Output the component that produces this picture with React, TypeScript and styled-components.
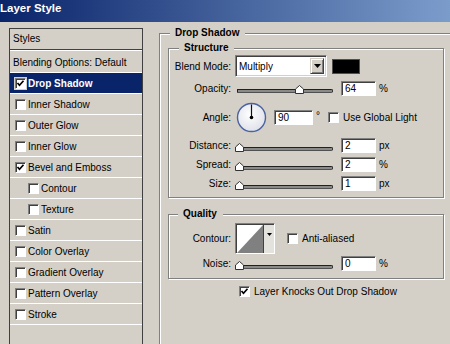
import React from 'react';
import styled, { createGlobalStyle } from 'styled-components';

const FACE = '#d4d0c8';
const NAVY = '#0a246a';

const GlobalStyle = createGlobalStyle`
  html, body {
    margin: 0;
    padding: 0;
    background: ${FACE};
  }
  body {
    font-family: "Liberation Sans", Arial, sans-serif;
    font-size: 10px;
    color: #000;
    overflow: hidden;
  }
`;

const Window = styled.div`
  width: 450px;
  height: 344px;
  overflow: hidden;
  background: ${FACE};
  display: flex;
  flex-direction: column;
`;

const TitleBar = styled.div`
  height: 22px;
  flex-shrink: 0;
  background: linear-gradient(to right, ${NAVY} 0, #a6caf0 620px);
  display: flex;
  align-items: flex-start;
  padding-top: 2px;
  box-sizing: border-box;
`;

const Title = styled.span`
  color: #fff;
  font-weight: bold;
  font-size: 11.5px;
  line-height: 13px;
`;

const Body = styled.div`
  flex: 1;
  display: flex;
  align-items: flex-start;
  padding: 6px 0 0 9px;
  min-height: 0;
`;

/* left styles list */

const StylesPanel = styled.div`
  width: 134px;
  height: 340px;
  flex-shrink: 0;
  box-sizing: border-box;
  border: 1px solid #404040;
  border-bottom: none;
  display: flex;
  flex-direction: column;
`;

const PanelHeader = styled.div`
  height: 20px;
  line-height: 20px;
  padding-left: 3px;
  border-bottom: 1px solid #404040;
  box-shadow: 0 1px 0 #fff;
  margin-bottom: 2px;
`;

const StyleRow = styled.div<{ $selected?: boolean; $indent?: number }>`
  height: 20px;
  display: flex;
  align-items: center;
  gap: 2px;
  padding-left: ${p => p.$indent ?? 5}px;
  border-bottom: 1px solid #fff;
  background: ${p => (p.$selected ? NAVY : 'transparent')};
  color: ${p => (p.$selected ? '#fff' : '#000')};
  font-weight: ${p => (p.$selected ? 'bold' : 'normal')};
  white-space: nowrap;
`;

/* win-classic controls */

const CheckBox = styled.span`
  width: 11px;
  height: 11px;
  flex-shrink: 0;
  box-sizing: border-box;
  background: #fff;
  border-top: 1px solid #808080;
  border-left: 1px solid #808080;
  border-bottom: 1px solid #fff;
  border-right: 1px solid #fff;
  box-shadow: inset 1px 1px 0 #404040;
  display: flex;
  align-items: center;
  justify-content: center;
  outline: 1px solid ${FACE};
`;

const Check = ({ checked }: { checked?: boolean }) => (
  <CheckBox>
    {checked && (
      <svg width="9" height="9" viewBox="0 0 9 9">
        <path d="M1.5 4 L3.5 6.2 L7.5 1.8" fill="none" stroke="#000" strokeWidth="1.7" />
      </svg>
    )}
  </CheckBox>
);

const Field = styled.span<{ $w: number }>`
  width: ${p => p.$w}px;
  height: 15px;
  flex-shrink: 0;
  box-sizing: border-box;
  background: #fff;
  border-top: 1px solid #808080;
  border-left: 1px solid #808080;
  border-bottom: 1px solid #fff;
  border-right: 1px solid #fff;
  box-shadow: inset 1px 1px 0 #404040;
  padding-left: 3px;
  line-height: 13px;
  margin-left: ${p => (p.$w > 36 ? 7 : 8)}px;
`;

const Unit = styled.span`
  margin-left: 3px;
`;

/* group boxes */

const Group = styled.fieldset<{ $w: number; $h?: number; $pl?: number }>`
  margin: 0;
  padding: 0 0 0 ${p => p.$pl ?? 0}px;
  width: ${p => p.$w}px;
  ${p => (p.$h ? `height: ${p.$h}px;` : '')}
  box-sizing: border-box;
  border: 1px solid #808080;
  box-shadow: inset 1px 1px 0 #fff, 1px 1px 0 #fff;
  min-width: 0;
`;

const Legend = styled.legend<{ $ml: number }>`
  font-weight: bold;
  line-height: 12px;
  margin-left: ${p => p.$ml}px;
  padding: 0 6px 0 5px;
  background: ${FACE};
`;

const Content = styled.div`
  margin-left: 16px;
  margin-top: -1px;
`;

const Spacer = styled.div<{ $h: number }>`
  height: ${p => p.$h}px;
`;

const Row = styled.div<{ $h: number; $mt?: number }>`
  display: grid;
  grid-template-columns: 62px auto;
  column-gap: 4px;
  align-items: center;
  height: ${p => p.$h}px;
  margin-top: ${p => p.$mt ?? 0}px;
`;

const Label = styled.span`
  text-align: right;
  white-space: nowrap;
`;

const Controls = styled.div`
  display: flex;
  align-items: center;
  white-space: nowrap;
`;

/* blend mode */

const Select = styled.div`
  width: 92px;
  height: 22px;
  box-sizing: border-box;
  background: #fff;
  border-top: 1px solid #808080;
  border-left: 1px solid #808080;
  border-bottom: 1px solid #fff;
  border-right: 1px solid #fff;
  box-shadow: inset 1px 1px 0 #404040, inset -1px -1px 0 ${FACE};
  display: flex;
  align-items: center;
  padding: 2px 2px 2px 3px;
`;

const SelectText = styled.span`
  flex: 1;
`;

const DropButton = styled.span`
  width: 14px;
  height: 16px;
  box-sizing: border-box;
  background: ${FACE};
  border-top: 1px solid ${FACE};
  border-left: 1px solid ${FACE};
  border-bottom: 1px solid #404040;
  border-right: 1px solid #404040;
  box-shadow: inset 1px 1px 0 #fff, inset -1px -1px 0 #808080;
  display: flex;
  align-items: center;
  justify-content: center;
`;

const Arrow = () => (
  <svg width="7" height="4" viewBox="0 0 7 4">
    <polygon points="0,0 7,0 3.5,4" fill="#000" />
  </svg>
);

const Swatch = styled.span`
  width: 28px;
  height: 15px;
  margin-left: 5px;
  box-sizing: border-box;
  background: #000;
  border: 1px solid #505050;
`;

/* slider */

const SliderBox = styled.div`
  position: relative;
  width: 98px;
  height: 10px;
  margin-top: 4px;
  flex-shrink: 0;
`;

const Track = styled.div`
  margin: 4px 0 0 2px;
  width: 96px;
  height: 4px;
  box-sizing: border-box;
  border: 1px solid #202020;
  border-bottom-color: #505050;
  border-radius: 0 2px 2px 0;
  background: #8a8a8a;
`;

const Thumb = styled.svg`
  position: absolute;
  top: 0;
`;

const Slider = ({ value }: { value: number }) => (
  <SliderBox>
    <Track />
    <Thumb width="9" height="9" viewBox="0 0 9 9" style={{ left: value * 0.93 }}>
      <polygon points="0.5,8.5 0.5,4 4.5,0.5 8.5,4 8.5,8.5" fill="#fff" stroke="#333" />
    </Thumb>
  </SliderBox>
);

/* angle dial */

const Dial = () => (
  <svg width="31" height="31" viewBox="0 0 31 31" style={{ marginLeft: 1 }}>
    <defs>
      <radialGradient id="dialFill" cx="45%" cy="40%" r="60%">
        <stop offset="0" stopColor="#ffffff" />
        <stop offset="1" stopColor="#dfe2ea" />
      </radialGradient>
    </defs>
    <circle cx="15.5" cy="15.5" r="14" fill="url(#dialFill)" stroke="#4a62a0" strokeWidth="1.4" />
    <line x1="15.5" y1="15.5" x2="15.5" y2="2.5" stroke="#111" strokeWidth="1.2" />
    <circle cx="15.5" cy="15.5" r="1.8" fill="#000" />
  </svg>
);

const Degree = styled.span`
  margin-left: 3px;
  align-self: flex-start;
  margin-top: 8px;
`;

const CheckLabel = styled.label<{ $ml: number }>`
  display: flex;
  align-items: center;
  gap: 4px;
  margin-left: ${p => p.$ml}px;
`;

/* contour picker */

const ContourBox = styled.div`
  width: 40px;
  height: 31px;
  box-sizing: border-box;
  border-top: 1px solid #808080;
  border-left: 1px solid #808080;
  border-bottom: 1px solid #fff;
  border-right: 1px solid #fff;
  box-shadow: inset 1px 1px 0 #404040;
  display: flex;
  padding: 1px 0 0 1px;
`;

const ContourStrip = styled.span`
  width: 11px;
  background: #e4e2dc;
  border-left: 1px solid #404040;
  display: flex;
  justify-content: center;
  padding-top: 8px;
  box-sizing: border-box;
`;

const KnockRow = styled.div`
  margin-top: 7px;
  padding-left: 71px;
`;

const effects: { name: string; checked?: boolean; selected?: boolean; indent?: number }[] = [
  { name: 'Drop Shadow', checked: true, selected: true },
  { name: 'Inner Shadow' },
  { name: 'Outer Glow' },
  { name: 'Inner Glow' },
  { name: 'Bevel and Emboss', checked: true },
  { name: 'Contour', indent: 18 },
  { name: 'Texture', indent: 18 },
  { name: 'Satin' },
  { name: 'Color Overlay' },
  { name: 'Gradient Overlay' },
  { name: 'Pattern Overlay' },
  { name: 'Stroke' },
];

const sizeRows = [
  { label: 'Distance:', value: 2, unit: 'px' },
  { label: 'Spread:', value: 2, unit: '%' },
  { label: 'Size:', value: 1, unit: 'px' },
];

export default function App() {
  return (
    <Window>
      <GlobalStyle />
      <TitleBar>
        <Title>Layer Style</Title>
      </TitleBar>
      <Body>
        <StylesPanel>
          <PanelHeader>Styles</PanelHeader>
          <StyleRow $indent={3}>Blending Options: Default</StyleRow>
          {effects.map(e => (
            <StyleRow key={e.name} $selected={e.selected} $indent={e.indent}>
              <Check checked={e.checked} />
              {e.name}
            </StyleRow>
          ))}
        </StylesPanel>

        <Content>
          <Group $w={300} $h={330} $pl={8}>
            <Legend $ml={2}>Drop Shadow</Legend>
            <Spacer $h={3} />
            <Group $w={276}>
              <Legend $ml={10}>Structure</Legend>
              <Row $h={22} $mt={1}>
                <Label>Blend Mode:</Label>
                <Controls>
                  <Select>
                    <SelectText>Multiply</SelectText>
                    <DropButton>
                      <Arrow />
                    </DropButton>
                  </Select>
                  <Swatch />
                </Controls>
              </Row>
              <Row $h={20} $mt={1}>
                <Label>Opacity:</Label>
                <Controls>
                  <Slider value={64} />
                  <Field $w={35}>64</Field>
                  <Unit>%</Unit>
                </Controls>
              </Row>
              <Row $h={34} $mt={2}>
                <Label>Angle:</Label>
                <Controls>
                  <Dial />
                  <Field $w={39}>90</Field>
                  <Degree>°</Degree>
                  <CheckLabel $ml={8}>
                    <Check />
                    Use Global Light
                  </CheckLabel>
                </Controls>
              </Row>
              {sizeRows.map((r, i) => (
                <Row key={r.label} $h={19} $mt={i === 0 ? 2 : 0}>
                  <Label>{r.label}</Label>
                  <Controls>
                    <Slider value={0} />
                    <Field $w={35}>{r.value}</Field>
                    <Unit>{r.unit}</Unit>
                  </Controls>
                </Row>
              ))}
              <Spacer $h={4} />
            </Group>

            <Spacer $h={10} />
            <Group $w={276}>
              <Legend $ml={9}>Quality</Legend>
              <Row $h={32} $mt={2}>
                <Label>Contour:</Label>
                <Controls>
                  <ContourBox>
                    <svg width="26" height="28" viewBox="0 0 26 28">
                      <rect width="26" height="28" fill="#fff" />
                      <polygon points="0,28 26,0 26,28" fill="#808080" />
                    </svg>
                    <ContourStrip>
                      <svg width="5" height="3" viewBox="0 0 5 3">
                        <polygon points="0,0 5,0 2.5,3" fill="#000" />
                      </svg>
                    </ContourStrip>
                  </ContourBox>
                  <CheckLabel $ml={12}>
                    <Check />
                    Anti-aliased
                  </CheckLabel>
                </Controls>
              </Row>
              <Row $h={19}>
                <Label>Noise:</Label>
                <Controls>
                  <Slider value={0} />
                  <Field $w={35}>0</Field>
                  <Unit>%</Unit>
                </Controls>
              </Row>
              <Spacer $h={5} />
            </Group>

            <KnockRow>
              <CheckLabel $ml={0}>
                <Check checked />
                Layer Knocks Out Drop Shadow
              </CheckLabel>
            </KnockRow>
          </Group>
        </Content>
      </Body>
    </Window>
  );
}
